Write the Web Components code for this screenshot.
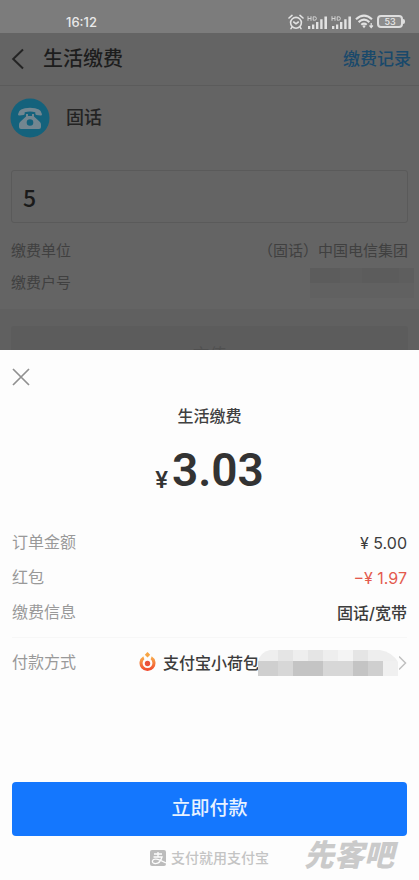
<!DOCTYPE html>
<html lang="zh-CN">
<head>
<meta charset="utf-8">
<meta name="viewport" content="width=device-width, initial-scale=1">
<title>生活缴费</title>
<style>
html, body { margin: 0; min-height: 100%; background: #5f5f5f; }
body { font-family: Roboto, "Noto Sans CJK SC", sans-serif; }
</style>
</head>
<body>
<pay-screen></pay-screen>
<script>
const define = (name, html) => customElements.define(name, class extends HTMLElement {
  constructor() {
    super();
    const t = document.createElement('template');
    t.innerHTML = `<style>*{box-sizing:border-box}button,input{font:inherit;color:inherit}button{border:0;background:none;padding:0;cursor:pointer}svg{display:block}</style>` + html;
    this.attachShadow({ mode: 'open' }).append(t.content.cloneNode(true));
  }
});

define('status-bar', `
<style>
:host { display: flex; align-items: center; justify-content: space-between; height: 33px; padding: 10px 14px 0 66px; background: #7c7c7c; color: #e9e9e9; font-size: 13px; font-weight: 500; line-height: 20px; font-family: Inter, sans-serif; }
.icons { display: flex; align-items: center; gap: 3px; }
.battery { display: flex; align-items: center; }
.cell { width: 26px; height: 13px; border: 2px solid #dedede; border-radius: 4px; font-size: 9px; line-height: 9px; text-align: center; background: #8d8d8d; }
.tip { width: 2px; height: 5px; background: #dedede; border-radius: 0 2px 2px 0; }
</style>
<span>16:12</span>
<div class="icons">
  <svg width="16" height="16" viewBox="0 0 16 16" fill="none" stroke="#e2e2e2" stroke-width="1.6" stroke-linecap="round"><circle cx="8" cy="8.8" r="5.4"/><path d="M1 4 4 1.4M15 4 12 1.4M3.8 13.4 3 14.6M12.2 13.4 13 14.6M5.7 8 8 9.800 10.300 8"/></svg>
  <signal-bars></signal-bars>
  <signal-bars></signal-bars>
  <svg width="19" height="15" viewBox="0 0 19 15" fill="none" stroke="#e2e2e2" stroke-width="2.1"><path d="M1 5.3Q9 -2 17 5.3M3.6 8.1Q9 3.2 14.4 8.1M6.3 10.7Q9 8.4 11.7 10.7"/><path d="M7.3 12 9 14.2 10.7 12Q9 10.7 7.3 12Z" fill="#e2e2e2" stroke="none"/><path d="M16.2 9v4.4M14.5 11.5l1.7 2 1.7-2" stroke-width="1.2"/></svg>
  <div class="battery"><div class="cell">53</div><div class="tip"></div></div>
</div>`);

define('signal-bars', `
<style>:host { display: block; }</style>
<svg width="21" height="14" viewBox="0 0 21 14" fill="#e2e2e2"><path d="M1 11h2.3v3H1zM5 9.5h2.3V14H5zM9 7h2.4v7H9zM13.2 4.2h2.4V14h-2.4zM17.4 1.5h2.6V14h-2.6z"/><path d="M1 1.2v4.6M4 1.2v4.6M1 3.5h3M6.200 1.800v3.400h1.600q1.600 0 1.600-1.700T7.800 1.800z" fill="none" stroke="#d2d2d2"/></svg>`);

define('nav-header', `
<style>
:host { display: flex; align-items: center; height: 53px; padding: 0 8px 0 10px; border-bottom: 1px solid #5b5b5b; background: #646464; }
button { width: 16px; height: 32px; margin-right: 17px; }
h1 { margin: 0; flex: 1; font-size: 20px; line-height: 28px; font-weight: 500; color: #1d1d1d; }
a { color: #19496b; font-size: 17px; line-height: 24px; font-weight: 500; text-decoration: none; }
</style>
<button aria-label="返回"><svg width="16" height="32" viewBox="0 0 16 32" fill="none" stroke="#242424" stroke-width="2"><path d="M13 6.5 3.2 16 13 25.5"/></svg></button>
<h1><slot></slot></h1>
<a href="#records">缴费记录</a>`);

define('service-title', `
<style>
:host { display: flex; align-items: center; gap: 16px; padding: 12px 10px 0; height: 52px; color: #232323; font-size: 18px; line-height: 26px; font-weight: 500; }
</style>
<svg width="40" height="40" viewBox="0 0 40 40"><circle cx="20" cy="20" r="19.5" fill="#14627c"/><path d="M8 16.2Q8.300 9.700 20 9.700T32 16.200Q32 17.700 30.500 17.500L26.400 16.900Q25.300 16.700 25.300 15.400V14.200Q20 12.800 14.700 14.200V15.400Q14.700 16.700 13.600 16.900L9.500 17.500Q8 17.700 8 16.200Z" fill="#728690"/><path fill-rule="evenodd" d="M16 16h2v2h4v-2h2v2.500l6 5.500q1 1 1 2.500V29q0 2-2 2H11q-2 0-2-2v-2.500q0-1.500 1-2.500l6-5.500ZM20 21.200a3.300 3.300 0 1 0 0 6.600 3.300 3.300 0 0 0 0-6.600Z" fill="#728690"/></svg>
<span><slot></slot></span>`);

define('amount-field', `
<style>
:host { display: block; margin: 32px 11px 15px; }
input { display: block; width: 100%; height: 53px; padding: 0 11px; border: 1px solid #5a5a5a; border-radius: 3px; background: #646464; color: #1a1a1a; font-family: "Noto Sans CJK SC", sans-serif; font-size: 23px; outline: 0; font-weight: 500; }
</style>
<input aria-label="缴费金额" inputmode="decimal" value="5">`);

define('account-line', `
<style>
:host { display: flex; justify-content: space-between; align-items: center; height: 26px; margin: 0 11px 6px; color: #404040; font-size: 15px; line-height: 26px; }
</style>
<span><slot></slot></span><slot name="value"></slot>`);

define('bill-page', `
<style>
:host { display: flex; flex-direction: column; background: #646464; }
footer { flex: 1; margin-top: 7px; padding: 17px 11px 0; background: #606060; }
footer button { width: 100%; height: 54px; border-radius: 3px; background: #5c5c5c; color: #505050; font-size: 17px; }
.mask { margin-right: -6px; }
</style>
<status-bar></status-bar>
<nav-header>生活缴费</nav-header>
<service-title>固话</service-title>
<amount-field></amount-field>
<account-line>缴费单位<span slot="value">（固话）中国电信集团</span></account-line>
<account-line>缴费户号<svg class="mask" slot="value" width="104" height="30" viewBox="0 0 104 30" aria-label="已隐藏"><rect width="104" height="30" fill="#616161"/><path fill="#5c5c5c" d="M0 0h30v15H0zM52 0h37v15H52z"/><path fill="#5e5e5e" d="M30 0h22v15H30zM89 0h15v15H89z"/></svg></account-line>
<footer><button>充值</button></footer>`);

define('detail-row', `
<style>
:host { display: flex; align-items: center; justify-content: space-between; height: 35px; font-size: 16px; line-height: 24px; color: #999; }
.value { display: flex; align-items: center; color: var(--value, #3c3c3c); font-family: Inter, "Noto Sans CJK SC", sans-serif; font-weight: 500; }
::slotted(.money) { font-weight: 400; }
</style>
<span><slot></slot></span><span class="value"><slot name="value"></slot></span>`);

define('method-picker', `
<style>
:host { display: block; }
button { display: flex; align-items: center; color: #3c3c3c; font-weight: 500; }
.logo { margin-right: 6px; }
.name { white-space: nowrap; }
.mask { margin-left: -1px; }
.arrow { margin-left: 1px; }
</style>
<button aria-label="付款方式 支付宝小荷包">
<svg class="logo" width="19" height="22" viewBox="0 0 19 22"><defs><linearGradient id="g" x2="0" y2="1"><stop stop-color="#f9b04e"/><stop offset="1" stop-color="#f0442b"/></linearGradient></defs><path d="M5.300 4.300A8 8 0 1 0 13.700 4.300L12.600 7.300A4.900 4.900 0 1 1 6.400 7.300Z" fill="url(#g)"/><path d="M9.500 0 12.200 2.800 9.500 5.600 6.800 2.800Z" fill="#f7a545"/><circle cx="9.500" cy="11.500" r="2.700" fill="#e9513b"/></svg>
<span class="name">支付宝小荷包</span>
<svg class="mask" width="140" height="26" viewBox="0 0 140 26"><defs><clipPath id="c"><path d="M12 0h110q12 2 18 12v14H0V12Q2 2 12 0Z"/></clipPath></defs><g clip-path="url(#c)"><path fill="#eee" d="M0 0h140v11H0z"/><path fill="#e5e5e5" d="M20 0h15v11H20zM50 0h15v11H50zM95 0h15v11H95z"/><path fill="#f4f4f4" d="M80 0h15v11H80z"/><path fill="#cfcfcf" d="M0 11h125v15H0z"/><path fill="#c4c4c4" d="M35 11h30v15H35zM95 11h15v15H95z"/><path fill="#d7d7d7" d="M20 11h15v15H20zM65 11h30v15H65z"/><path fill="#f0f0f0" d="M125 11h15v15h-15z"/></g></svg>
<svg class="arrow" width="8" height="16" viewBox="0 0 8 16" fill="none" stroke="#c0c0c0" stroke-width="1.500"><path d="M0 1.500 6.500 8 0 14.500"/></svg>
</button>`);

define('pay-sheet', `
<style>
:host { display: flex; flex-direction: column; padding: 15px 12px 12px; background: #fdfdfd; }
.close { width: 24px; height: 24px; margin-left: -3px; }
h2 { margin: 16px 0 0; text-align: center; font-size: 16px; line-height: 24px; font-weight: 500; color: #404040; }
.price { display: flex; justify-content: center; align-items: end; gap: 4px; height: 56px; margin: 13px 0 27px; color: #333; font-weight: 600; font-size: 46px; line-height: 56px; }
.price small { font-size: 24px; line-height: 36px; font-weight: 500; }
.discount { --value: #e45a4e; }
.method { margin-top: 7px; height: 48px; padding-top: 2px; border-top: 1px solid #f7f7f7; }
.pay { width: 100%; height: 54px; margin-top: 97px; border-radius: 4px; background: #1477fe; color: #e8f2ff; font-size: 19px; line-height: 28px; font-weight: 500; }
.brand { display: flex; align-items: center; justify-content: center; gap: 5px; height: 20px; margin-top: 12px; font-size: 14px; line-height: 20px; font-weight: 500; color: #c4c4c4; }
</style>
<button class="close" aria-label="关闭"><svg width="24" height="24" viewBox="0 0 24 24" stroke="#909090" stroke-width="1.700"><path d="M4 4 20 20M20 4 4 20"/></svg></button>
<h2>生活缴费</h2>
<div class="price"><small>¥</small><span>3.03</span></div>
<detail-row>订单金额<span class="money" slot="value">¥ 5.00</span></detail-row>
<detail-row class="discount">红包<span class="money" slot="value">−¥ 1.97</span></detail-row>
<detail-row>缴费信息<span slot="value">固话/宽带</span></detail-row>
<detail-row class="method">付款方式<method-picker slot="value"></method-picker></detail-row>
<button class="pay">立即付款</button>
<div class="brand"><svg width="16" height="16" viewBox="0 0 16 16"><rect width="16" height="16" rx="2" fill="#bcbcbc"/><path d="M4 4h8M8 2v5M3.500 7H12Q10 14 5 13.500 2 13 2.500 10.800 3 9 6 9.200 9 9.500 16 13" fill="none" stroke="#fdfdfd" stroke-width="1.300"/></svg><span>支付就用支付宝</span></div>`);

define('pay-screen', `
<style>
:host { display: grid; min-height: 100vh; position: relative; }
bill-page, pay-sheet { grid-area: 1 / 1; min-width: 0; }
pay-sheet { align-self: end; z-index: 1; }
.mark { position: absolute; right: 25px; bottom: 4px; z-index: 2; font-size: 30px; line-height: 40px; font-weight: 900; font-style: italic; color: #cacaca; pointer-events: none; }
</style>
<bill-page></bill-page>
<pay-sheet></pay-sheet>
<div class="mark">先客吧</div>`);
</script>
</body>
</html>
